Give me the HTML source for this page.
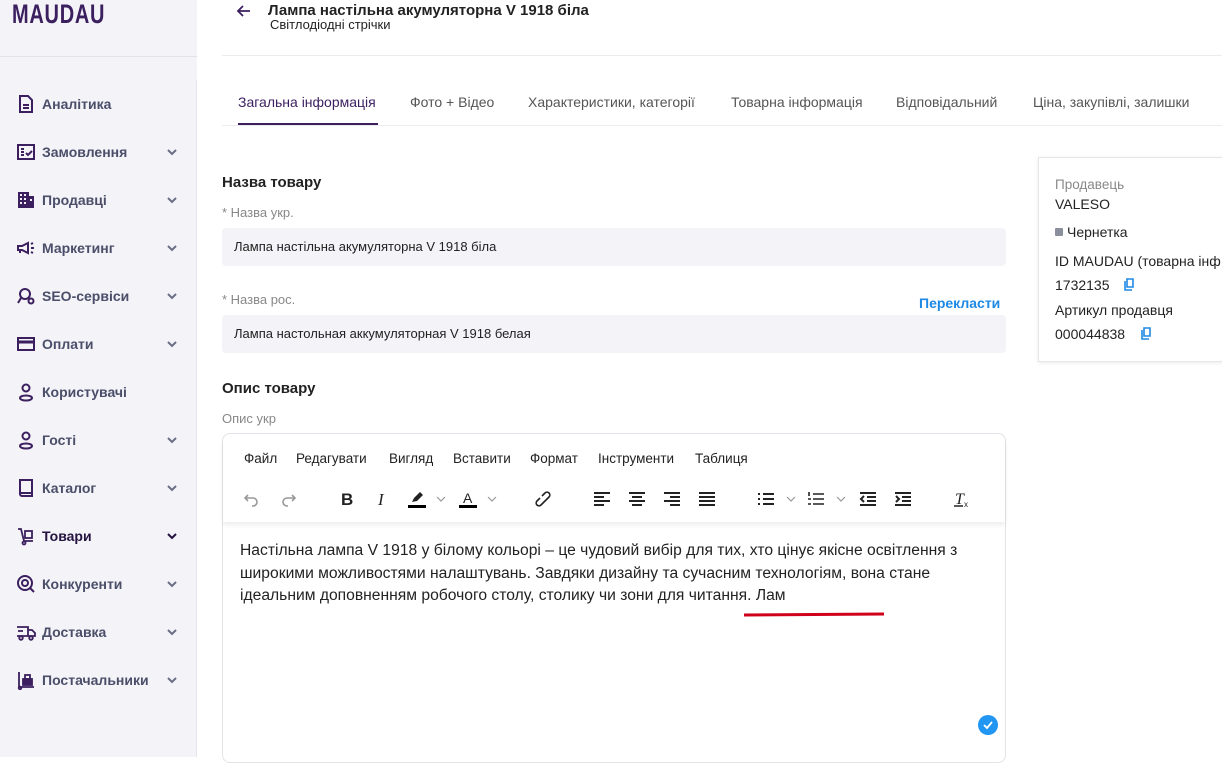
<!DOCTYPE html>
<html><head><meta charset="utf-8"><style>
*{margin:0;padding:0;box-sizing:border-box}
body{width:1222px;height:757px;overflow:hidden;background:#fff;font-family:"Liberation Sans","DejaVu Sans",sans-serif;position:relative;color:#222}
.abs{position:absolute;white-space:nowrap}
.sb{position:absolute;left:0;top:0;width:197px;height:757px;background:#f3f3f8}
.nav{position:absolute;left:16px;font-size:14px;font-weight:bold;color:#4a4e69;display:flex;align-items:center}
.nav svg{width:20px;height:20px;margin-right:6px}
.chev{position:absolute;left:166px;width:12px;height:8px}
.tab{position:absolute;top:94px;font-size:14px;color:#555}
.lbl{font-size:13px;color:#888}
.inp{position:absolute;left:222px;width:784px;height:38px;background:#f3f3f8;border-radius:4px;font-size:13px;padding-left:12px;line-height:38px;color:#222}
.tb svg{position:absolute;top:489px;width:20px;height:20px}
.mn{position:absolute;top:451px;font-size:13.5px;color:#222}
</style></head><body>
<div class="sb"></div>
<div class="abs" style="left:0;top:56px;width:197px;height:1px;background:#e2e2ea"></div>
<div class="abs" style="left:196px;top:80px;width:1px;height:677px;background:#e6e6ee"></div>
<div class="abs" style="left:12px;top:1px;font-size:27px;line-height:27px;font-weight:bold;color:#3b1f5e;letter-spacing:1px;transform:scaleX(0.74);transform-origin:left">MAUDAU</div>

<div class="nav" style="top:94px"><svg viewBox="0 0 20 20" fill="none" stroke="#3b1f5e" stroke-width="2"><path d="M4 2h8l4 4v12H4z M7 11h6 M7 14h6"/></svg>Аналітика</div>
<div class="nav" style="top:142px"><svg viewBox="0 0 20 20" fill="none" stroke="#3b1f5e" stroke-width="2"><rect x="2" y="3" width="16" height="14"/><path d="M5 7h3M5 10h3M5 13h3M10 11l2 2 4-4"/></svg>Замовлення</div>
<div class="nav" style="top:190px"><svg viewBox="0 0 20 20" fill="#3b1f5e"><path d="M2 2h11v16H2z M13 6h5v12h-5z" /><g fill="#f3f3f8"><rect x="4" y="4" width="2" height="2"/><rect x="8" y="4" width="2" height="2"/><rect x="4" y="8" width="2" height="2"/><rect x="8" y="8" width="2" height="2"/><rect x="4" y="12" width="2" height="2"/><rect x="8" y="12" width="2" height="2"/><rect x="14" y="9" width="2" height="2"/></g></svg>Продавці</div>
<div class="nav" style="top:238px"><svg viewBox="0 0 20 20" fill="none" stroke="#3b1f5e" stroke-width="2"><path d="M2 8h4l6-3v10l-6-3H2z M4 12v3 M15 6l2-1 M15 10h3 M15 14l2 1"/></svg>Маркетинг</div>
<div class="nav" style="top:286px"><svg viewBox="0 0 20 20" fill="none" stroke="#3b1f5e" stroke-width="2"><circle cx="9" cy="8" r="5"/><path d="M5 12l-3 5"/><circle cx="15" cy="15" r="2.5"/></svg>SEO-сервіси</div>
<div class="nav" style="top:334px"><svg viewBox="0 0 20 20" fill="none" stroke="#3b1f5e" stroke-width="2"><rect x="2" y="4" width="16" height="12"/><path d="M2 8h16" stroke-width="3"/></svg>Оплати</div>
<div class="nav" style="top:382px"><svg viewBox="0 0 20 20" fill="none" stroke="#3b1f5e" stroke-width="2"><circle cx="10" cy="6" r="3.5"/><ellipse cx="10" cy="16" rx="6" ry="2.5"/></svg>Користувачі</div>
<div class="nav" style="top:430px"><svg viewBox="0 0 20 20" fill="none" stroke="#3b1f5e" stroke-width="2"><circle cx="10" cy="6" r="3.5"/><ellipse cx="10" cy="16" rx="6" ry="2.5"/></svg>Гості</div>
<div class="nav" style="top:478px"><svg viewBox="0 0 20 20" fill="none" stroke="#3b1f5e" stroke-width="2"><path d="M4 2h12v16H6a2 2 0 0 1-2-2z M4 15h12"/></svg>Каталог</div>
<div class="nav" style="top:526px;color:#24123f"><svg viewBox="0 0 20 20" fill="none" stroke="#3b1f5e" stroke-width="1.8"><path d="M2 3h3l3 12h9"/><rect x="9" y="5" width="7" height="7"/><circle cx="8" cy="17" r="1.5"/></svg>Товари</div>
<div class="nav" style="top:574px"><svg viewBox="0 0 20 20" fill="none" stroke="#3b1f5e" stroke-width="2"><circle cx="9" cy="9" r="7"/><circle cx="9" cy="9" r="3"/><path d="M14 14l4 4"/></svg>Конкуренти</div>
<div class="nav" style="top:622px"><svg viewBox="0 0 20 20" fill="none" stroke="#3b1f5e" stroke-width="1.8"><path d="M1 5h11v9H1 M12 8h4l3 3v3h-7 M2 9h5"/><circle cx="5" cy="16" r="1.8"/><circle cx="15" cy="16" r="1.8"/></svg>Доставка</div>
<div class="nav" style="top:670px"><svg viewBox="0 0 20 20" fill="none" stroke="#3b1f5e" stroke-width="1.8"><path d="M3 2v15h15"/><rect x="7" y="9" width="9" height="6" fill="#3b1f5e"/><rect x="9" y="5" width="5" height="4"/><circle cx="4" cy="18" r="1.3"/></svg>Постачальники</div>

<svg class="chev" style="top:148px" viewBox="0 0 12 8"><path d="M2 2l4 4 4-4" fill="none" stroke="#6b6f85" stroke-width="2"/></svg>
<svg class="chev" style="top:196px" viewBox="0 0 12 8"><path d="M2 2l4 4 4-4" fill="none" stroke="#6b6f85" stroke-width="2"/></svg>
<svg class="chev" style="top:244px" viewBox="0 0 12 8"><path d="M2 2l4 4 4-4" fill="none" stroke="#6b6f85" stroke-width="2"/></svg>
<svg class="chev" style="top:292px" viewBox="0 0 12 8"><path d="M2 2l4 4 4-4" fill="none" stroke="#6b6f85" stroke-width="2"/></svg>
<svg class="chev" style="top:340px" viewBox="0 0 12 8"><path d="M2 2l4 4 4-4" fill="none" stroke="#6b6f85" stroke-width="2"/></svg>
<svg class="chev" style="top:436px" viewBox="0 0 12 8"><path d="M2 2l4 4 4-4" fill="none" stroke="#6b6f85" stroke-width="2"/></svg>
<svg class="chev" style="top:484px" viewBox="0 0 12 8"><path d="M2 2l4 4 4-4" fill="none" stroke="#6b6f85" stroke-width="2"/></svg>
<svg class="chev" style="top:532px" viewBox="0 0 12 8"><path d="M2 2l4 4 4-4" fill="none" stroke="#24123f" stroke-width="2"/></svg>
<svg class="chev" style="top:580px" viewBox="0 0 12 8"><path d="M2 2l4 4 4-4" fill="none" stroke="#6b6f85" stroke-width="2"/></svg>
<svg class="chev" style="top:628px" viewBox="0 0 12 8"><path d="M2 2l4 4 4-4" fill="none" stroke="#6b6f85" stroke-width="2"/></svg>
<svg class="chev" style="top:676px" viewBox="0 0 12 8"><path d="M2 2l4 4 4-4" fill="none" stroke="#6b6f85" stroke-width="2"/></svg>

<svg class="abs" style="left:236px;top:4px" width="16" height="14" viewBox="0 0 16 14"><path d="M14 7H2M7 2L2 7l5 5" fill="none" stroke="#3b1f5e" stroke-width="1.8"/></svg>
<div class="abs" style="left:268px;top:2px;font-size:15px;font-weight:bold;color:#222">Лампа настільна акумуляторна V 1918 біла</div>
<div class="abs" style="left:270px;top:17px;font-size:13px;color:#222">Світлодіодні стрічки</div>
<div class="abs" style="left:222px;top:55px;width:1000px;height:1px;background:#ececf0"></div>

<div class="tab" style="left:238px;color:#3b1f5e">Загальна інформація</div>
<div class="tab" style="left:410px">Фото + Відео</div>
<div class="tab" style="left:528px">Характеристики, категорії</div>
<div class="tab" style="left:731px">Товарна інформація</div>
<div class="tab" style="left:896px">Відповідальний</div>
<div class="tab" style="left:1033px">Ціна, закупівлі, залишки</div>
<div class="abs" style="left:222px;top:125px;width:1000px;height:1px;background:#ececf0"></div>
<div class="abs" style="left:238px;top:123px;width:140px;height:2px;background:#3b1f5e"></div>

<div class="abs" style="left:222px;top:174px;font-size:15px;font-weight:bold">Назва товару</div>
<div class="abs lbl" style="left:222px;top:205px">* Назва укр.</div>
<div class="inp" style="top:228px">Лампа настільна акумуляторна V 1918 біла</div>
<div class="abs lbl" style="left:222px;top:292px">* Назва рос.</div>
<div class="abs" style="left:919px;top:295px;font-size:14px;font-weight:bold;color:#1e88e5">Перекласти</div>
<div class="inp" style="top:315px">Лампа настольная аккумуляторная V 1918 белая</div>
<div class="abs" style="left:222px;top:380px;font-size:15px;font-weight:bold">Опис товару</div>
<div class="abs lbl" style="left:222px;top:411px">Опис укр</div>

<div class="abs" style="left:222px;top:433px;width:784px;height:330px;border:1px solid #e3e3e8;border-radius:8px"></div>
<div class="abs" style="left:223px;top:434px;width:782px;height:88px;background:#fff;box-shadow:0 3px 5px rgba(0,0,0,0.07);border-radius:8px 8px 0 0"></div>
<div class="mn" style="left:244px">Файл</div>
<div class="mn" style="left:296px">Редагувати</div>
<div class="mn" style="left:389px">Вигляд</div>
<div class="mn" style="left:453px">Вставити</div>
<div class="mn" style="left:530px">Формат</div>
<div class="mn" style="left:598px">Інструменти</div>
<div class="mn" style="left:695px">Таблиця</div>
<div class="tb">
<svg style="left:242px" viewBox="0 0 20 20"><path d="M6 6l-3 3 3 3M3 9h8a4 4 0 0 1 0 8h-1" fill="none" stroke="#999" stroke-width="1.6"/></svg>
<svg style="left:278px" viewBox="0 0 20 20"><path d="M14 6l3 3-3 3M17 9H9a4 4 0 0 0 0 8h1" fill="none" stroke="#999" stroke-width="1.6"/></svg>
<svg style="left:337px" viewBox="0 0 20 20"><text x="4" y="16" font-size="17" font-weight="bold" font-family="Liberation Sans" fill="#222">B</text></svg>
<svg style="left:372px" viewBox="0 0 20 20"><text x="6" y="16" font-size="17" font-style="italic" font-family="Liberation Serif" fill="#222">I</text></svg>
<svg style="left:407px" viewBox="0 0 20 20"><path d="M5 13l2-4 6-6 3 3-6 6z" fill="#222"/><rect x="1" y="16" width="18" height="3" fill="#000"/></svg>
<svg style="left:432px" viewBox="0 0 20 20"><path d="M5 8l4 4 4-4" fill="none" stroke="#999" stroke-width="1.2"/></svg>
<svg style="left:458px" viewBox="0 0 20 20"><text x="5" y="14" font-size="14" font-family="Liberation Sans" fill="#222">A</text><rect x="1" y="16" width="18" height="3" fill="#000"/></svg>
<svg style="left:483px" viewBox="0 0 20 20"><path d="M5 8l4 4 4-4" fill="none" stroke="#999" stroke-width="1.2"/></svg>
<svg style="left:533px" viewBox="0 0 20 20"><path d="M9 11l-3 3a2.5 2.5 0 0 1-4-4l3-3M11 9l3-3a2.5 2.5 0 0 0-4-4L7 5M7 13l6-6" fill="none" stroke="#222" stroke-width="1.6" transform="translate(2 2)"/></svg>
<svg style="left:592px" viewBox="0 0 20 20"><path d="M2 4h16M2 8h10M2 12h16M2 16h10" stroke="#222" stroke-width="2"/></svg>
<svg style="left:627px" viewBox="0 0 20 20"><path d="M2 4h16M5 8h10M2 12h16M5 16h10" stroke="#222" stroke-width="2"/></svg>
<svg style="left:662px" viewBox="0 0 20 20"><path d="M2 4h16M8 8h10M2 12h16M8 16h10" stroke="#222" stroke-width="2"/></svg>
<svg style="left:697px" viewBox="0 0 20 20"><path d="M2 4h16M2 8h16M2 12h16M2 16h16" stroke="#222" stroke-width="2"/></svg>
<svg style="left:756px" viewBox="0 0 20 20"><path d="M7 5h11M7 10h11M7 15h11M2 5h2M2 10h2M2 15h2" stroke="#222" stroke-width="2"/></svg>
<svg style="left:782px" viewBox="0 0 20 20"><path d="M5 8l4 4 4-4" fill="none" stroke="#999" stroke-width="1.2"/></svg>
<svg style="left:806px" viewBox="0 0 20 20"><path d="M7 5h11M7 10h11M7 15h11M3 3v4M2 10h3M2 15h3" stroke="#222" stroke-width="1.6"/></svg>
<svg style="left:832px" viewBox="0 0 20 20"><path d="M5 8l4 4 4-4" fill="none" stroke="#999" stroke-width="1.2"/></svg>
<svg style="left:858px" viewBox="0 0 20 20"><path d="M2 4h16M9 8h9M9 12h9M2 16h16M6 7l-3 3 3 3" fill="none" stroke="#222" stroke-width="2"/></svg>
<svg style="left:893px" viewBox="0 0 20 20"><path d="M2 4h16M9 8h9M9 12h9M2 16h16M3 7l3 3-3 3" fill="none" stroke="#222" stroke-width="2"/></svg>
<svg style="left:952px" viewBox="0 0 20 20"><text x="3" y="15" font-size="16" font-style="italic" font-family="Liberation Serif" fill="#222">T</text><text x="12" y="18" font-size="8" font-family="Liberation Sans" fill="#222">x</text><path d="M2 17h9" stroke="#222" stroke-width="1.5"/></svg>
</div>

<div class="abs" style="left:240px;top:540px;font-size:15.5px;line-height:22.5px;color:#222;transform:scaleX(1.01);transform-origin:left top">Настільна лампа V 1918 у білому кольорі – це чудовий вибір для тих, хто цінує якісне освітлення з<br>широкими можливостями налаштувань. Завдяки дизайну та сучасним технологіям, вона стане<br>ідеальним доповненням робочого столу, столику чи зони для читання. Лам</div>
<div class="abs" style="left:744px;top:613px;width:140px;height:3px;background:#d0021b;transform:rotate(-0.4deg)"></div>
<svg class="abs" style="left:978px;top:715px" width="20" height="20" viewBox="0 0 20 20"><circle cx="10" cy="10" r="10" fill="#2196f3"/><path d="M6 10l3 3 5-6" fill="none" stroke="#fff" stroke-width="1.8"/></svg>

<div class="abs" style="left:1038px;top:157px;width:200px;height:205px;border:1px solid #e6e6ea;box-shadow:0 1px 4px rgba(0,0,0,0.08);background:#fff"></div>
<div class="abs" style="left:1055px;top:177px;font-size:13.5px;color:#888">Продавець</div>
<div class="abs" style="left:1055px;top:196px;font-size:14px">VALESO</div>
<div class="abs" style="left:1055px;top:228px;width:8px;height:8px;background:#8a8f9c;border-radius:1px"></div>
<div class="abs" style="left:1067px;top:224px;font-size:14px">Чернетка</div>
<div class="abs" style="left:1055px;top:253px;font-size:14px">ID MAUDAU (товарна інф</div>
<div class="abs" style="left:1055px;top:277px;font-size:14px">1732135</div>
<svg class="abs" style="left:1123px;top:278px" width="12" height="13" viewBox="0 0 12 13"><path d="M4 1h6v8H4z M2 3v9h7" fill="none" stroke="#1e88e5" stroke-width="1.6"/></svg>
<div class="abs" style="left:1055px;top:302px;font-size:14px">Артикул продавця</div>
<div class="abs" style="left:1055px;top:326px;font-size:14px">000044838</div>
<svg class="abs" style="left:1140px;top:327px" width="12" height="13" viewBox="0 0 12 13"><path d="M4 1h6v8H4z M2 3v9h7" fill="none" stroke="#1e88e5" stroke-width="1.6"/></svg>
</body></html>
